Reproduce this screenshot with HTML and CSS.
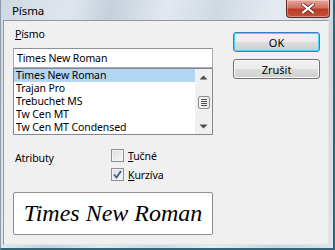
FILE: index.html
```html
<!DOCTYPE html>
<html lang="cs">
<head>
    <meta charset="UTF-8">
    <title>Písma</title>
    <link rel="stylesheet" href="styles.css">
</head>
<body>
    <div class="window">
        <div class="titlebar">
            <span class="title">Písma</span>
            <button class="close-btn" aria-label="Zavřít">
                <svg width="14" height="11" viewBox="0 0 14 11">
                    <path d="M2 1.5 L12 9.5 M12 1.5 L2 9.5" stroke="#6b2420" stroke-width="3.6" stroke-linecap="square"/>
                    <path d="M2 1.5 L12 9.5 M12 1.5 L2 9.5" stroke="#fff" stroke-width="2.2" stroke-linecap="square"/>
                </svg>
            </button>
        </div>

        <div class="client">
            <div class="left-col">
                <div class="label"><u>P</u>ísmo</div>
                <div class="textbox">Times New Roman</div>

                <div class="listbox">
                    <ul class="items">
                        <li class="selected">Times New Roman</li>
                        <li>Trajan Pro</li>
                        <li>Trebuchet MS</li>
                        <li>Tw Cen MT</li>
                        <li>Tw Cen MT Condensed</li>
                    </ul>
                    <div class="scrollbar">
                        <svg class="arrow" width="9" height="5" viewBox="0 0 9 5">
                            <path d="M0.5 4.5 L4.5 0.5 L8.5 4.5 Z" fill="#4d4d4d"/>
                        </svg>
                        <div class="thumb">
                            <span></span><span></span><span></span><span></span>
                        </div>
                        <svg class="arrow" width="9" height="5" viewBox="0 0 9 5">
                            <path d="M0.5 0.5 L4.5 4.5 L8.5 0.5 Z" fill="#4d4d4d"/>
                        </svg>
                    </div>
                </div>

                <div class="attrs">
                    <div class="attrs-label">Atributy</div>
                    <div class="checks">
                        <label class="check">
                            <span class="box"></span>
                            <span><u>T</u>učné</span>
                        </label>
                        <label class="check">
                            <span class="box">
                                <svg width="9" height="9" viewBox="0 0 9 9">
                                    <path d="M1 4.5 L3.5 7.5 L8 1" fill="none" stroke="#3d5a9e" stroke-width="1.8"/>
                                </svg>
                            </span>
                            <span><u>K</u>urzíva</span>
                        </label>
                    </div>
                </div>

                <div class="preview">Times New Roman</div>
            </div>

            <div class="right-col">
                <button class="btn default">OK</button>
                <button class="btn">Zrušit</button>
            </div>
        </div>
    </div>
</body>
</html>
```

FILE: styles.css
```css
body {
    margin: 0;
    font-family: "Noto Sans", sans-serif;
    font-size: 10.5px;
    letter-spacing: -0.1px;
    color: #000;
}
.window {
    width: 335px;
    height: 250px;
    box-sizing: border-box;
    display: flex;
    flex-direction: column;
    background: linear-gradient(105deg, #cfd8e2 0%, #dfe6ed 18%, #c6d0db 28%, #e2e8ef 42%, #d0d9e3 55%, #e6ebf1 70%, #cdd6e0 85%, #dde4eb 100%);
    border-left: 1px solid #8d9aa8;
    border-right: 2px solid #2f6677;
    border-bottom: 2px solid #2f6677;
}
.titlebar {
    height: 20px;
    display: flex;
    align-items: flex-start;
    justify-content: space-between;
}
.title {
    font-size: 11.5px;
    padding: 3px 0 0 11px;
}
.close-btn {
    width: 44px;
    height: 18px;
    margin-right: 3px;
    padding: 0;
    border: 1px solid #5e2a26;
    border-top: none;
    border-radius: 0 0 4px 4px;
    background: linear-gradient(#e6a79c 0%, #d4715f 45%, #bd3a25 55%, #c5513c 100%);
    display: flex;
    align-items: center;
    justify-content: center;
    box-shadow: inset 0 0 0 1px rgba(255,255,255,0.35);
}
.client {
    flex: 1;
    margin: 0 4px 3px 2px;
    background: #f0f0f0;
    border: 1px solid #8f9aa5;
    border-right-color: #dfe5ec;
    border-bottom-color: #dfe5ec;
    display: flex;
    gap: 20px;
    padding: 6px 0 0 9px;
}
.left-col {
    width: 200px;
    display: flex;
    flex-direction: column;
}
.label {
    height: 15px;
    line-height: 15px;
    padding-left: 2px;
}
.textbox {
    margin-top: 6px;
    height: 18px;
    line-height: 18px;
    background: #fff;
    border: 1px solid #abadb3;
    border-top-color: #8a8e96;
    padding-left: 3px;
}
.listbox {
    height: 65px;
    display: flex;
    border: 1px solid #828790;
    background: #fff;
}
.items {
    flex: 1;
    list-style: none;
    margin: 0;
    padding: 0;
}
.items li {
    height: 13px;
    line-height: 13px;
    padding-left: 2px;
}
.items li.selected {
    background: #b3d6f5;
}
.scrollbar {
    width: 17px;
    background: #f0f0f0;
    display: flex;
    flex-direction: column;
    align-items: center;
    justify-content: space-between;
    padding: 6px 0 5px;
    box-sizing: border-box;
}
.thumb {
    width: 12px;
    height: 13px;
    margin-left: 1px;
    box-sizing: border-box;
    border: 1px solid #8e8f8f;
    border-radius: 2px;
    background: linear-gradient(90deg, #f3f3f3, #e6e6e6);
    display: flex;
    flex-direction: column;
    align-items: center;
    justify-content: center;
    gap: 1px;
}
.thumb span {
    width: 6px;
    height: 1px;
    background: #555;
}
.attrs {
    display: flex;
    margin-top: 14px;
}
.attrs-label {
    width: 96px;
    padding: 2px 0 0 2px;
}
.checks {
    display: flex;
    flex-direction: column;
    gap: 6px;
}
.check {
    display: flex;
    align-items: center;
    gap: 4px;
    height: 13px;
}
.box {
    width: 11px;
    height: 11px;
    border: 1px solid #8f8f8f;
    background: linear-gradient(135deg, #dcdcdc, #f7f7f7);
    box-shadow: inset 0 0 0 1px #f4f4f4;
    display: flex;
    align-items: center;
    justify-content: center;
}
.preview {
    margin-top: 11px;
    height: 43px;
    box-sizing: border-box;
    border: 1px solid #8f8f8f;
    border-radius: 2px;
    background: #fff;
    display: flex;
    align-items: center;
    justify-content: center;
    font-family: "Liberation Serif", serif;
    font-style: italic;
    font-size: 24px;
    letter-spacing: 0;
}
.right-col {
    display: flex;
    flex-direction: column;
    gap: 7px;
    padding-top: 5px;
}
.btn {
    width: 87px;
    height: 20px;
    padding: 0;
    font-family: "Noto Sans", sans-serif;
    font-size: 11px;
    border: 1px solid #707070;
    border-radius: 3px;
    background: linear-gradient(#f2f2f2 0%, #ebebeb 50%, #dddddd 51%, #cfcfcf 100%);
    box-shadow: inset 0 0 0 1px #fbfbfb;
}
.btn.default {
    border-color: #3c7fb1;
    box-shadow: inset 0 0 0 1px #48d4ff;
}
```
